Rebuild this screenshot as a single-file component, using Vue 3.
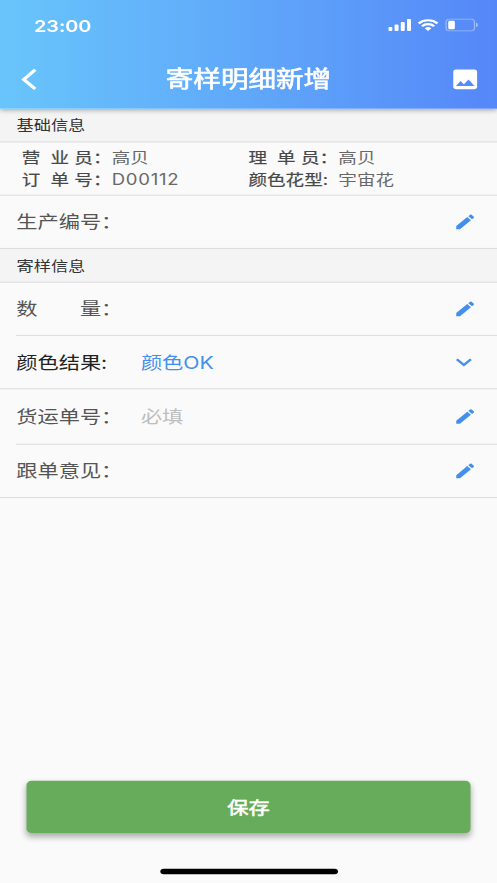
<script setup>
const info = [
  { chars: ['营', '业', '员'], value: '高贝' },
  { chars: ['理', '单', '员'], value: '高贝' },
  { chars: ['订', '单', '号'], value: 'D00112', latin: true },
  { label: '颜色花型', value: '宇宙花' },
]
const production = [{ label: '生产编号：', icon: 'edit' }]
const sample = [
  { label: '数　　量：', icon: 'edit', inset: true },
  { label: '颜色结果:', value: '颜色OK', icon: 'down', strong: true },
  { label: '货运单号：', value: '必填', hint: true, icon: 'edit', inset: true, tall: true },
  { label: '跟单意见：', icon: 'edit' },
]
const groups = [
  { title: '基础信息', info, rows: production },
  { title: '寄样信息', rows: sample },
]
</script>

<template>
  <div class="viewport">
    <main class="screen">
      <header class="header">
        <div class="status">
          <span class="time">23:00</span>
          <div class="indicators">
            <svg class="signal" viewBox="0 0 18 12">
              <rect x="0" y="7.8" width="3" height="3.7" rx=".8" />
              <rect x="4.7" y="5.6" width="3" height="5.9" rx=".8" />
              <rect x="9.4" y="3.3" width="3" height="8.2" rx=".8" />
              <rect x="14.1" y=".5" width="3" height="11" rx=".8" />
            </svg>
            <svg class="wifi" viewBox="0 0 16 12">
              <path d="M.9 4.5a10.2 10.2 0 0 1 14.2 0M3.4 7.1a6.6 6.6 0 0 1 9.2 0" fill="none" stroke="#fff" stroke-width="2" />
              <path d="M8 11.5 5.5 9a3.6 3.6 0 0 1 5 0z" />
            </svg>
            <svg class="battery" viewBox="0 0 25 12">
              <rect x=".5" y=".5" width="21.5" height="11" rx="2.8" fill="none" stroke="#fff" stroke-opacity=".42" />
              <rect x="2.2" y="2.1" width="5" height="7.8" rx="1.2" />
              <path d="M23.2 4v4c.8-.3 1.3-1.1 1.3-2s-.5-1.7-1.3-2z" fill-opacity=".5" />
            </svg>
          </div>
        </div>
        <nav class="nav">
          <svg class="back" viewBox="0 0 14 22"><path d="M11.6 2.1 2.9 11l8.7 8.9" /></svg>
          <h1>寄样明细新增</h1>
          <svg class="picture" viewBox="0 0 24 24"><path d="M21 19V5c0-1.1-.9-2-2-2H5c-1.1 0-2 .9-2 2v14c0 1.1.9 2 2 2h14c1.1 0 2-.9 2-2zM8.5 13.5l2.5 3.01L14.5 12l4.5 6H5l3.5-4.5z" /></svg>
        </nav>
      </header>

      <section v-for="g in groups" :key="g.title">
        <h2>{{ g.title }}</h2>
        <dl v-if="g.info" class="info">
          <div v-for="(item, i) in g.info" :key="i" class="pair">
            <dt v-if="item.chars" class="spread"><span v-for="(c, n) in item.chars" :key="n">{{ c }}</span><span>：</span></dt>
            <dt v-else>{{ item.label }}:</dt>
            <dd :class="{ latin: item.latin }">{{ item.value }}</dd>
          </div>
        </dl>
        <div v-for="row in g.rows" :key="row.label" class="row" :class="{ inset: row.inset, tall: row.tall }">
          <span class="label" :class="{ strong: row.strong }">{{ row.label }}</span>
          <span class="value" :class="{ hint: row.hint }">{{ row.value }}</span>
          <svg v-if="row.icon === 'edit'" class="edit" viewBox="0 0 24 24"><path d="M3 17.25V21h3.75L17.81 9.94l-3.75-3.75L3 17.25zM20.71 7.04c.39-.39.39-1.02 0-1.41l-2.34-2.34c-.39-.39-1.02-.39-1.41 0l-1.83 1.83 3.75 3.75 1.83-1.83z" /></svg>
          <svg v-else class="down" viewBox="0 0 24 24"><path d="M7.41 8.59 12 13.17l4.59-4.58L18 10l-6 6-6-6z" /></svg>
        </div>
      </section>

      <footer>
        <button type="button">保存</button>
        <div class="home"></div>
      </footer>
    </main>
  </div>
</template>

<style>
body {
  margin: 0;
  background: #fafafa;
}
</style>

<style scoped>
.viewport {
  width: 497px;
  height: 883px;
  overflow: hidden;
}
.screen {
  display: flex;
  flex-direction: column;
  width: 375px;
  height: 812px;
  transform: scale(1.32533, 1.08744);
  transform-origin: 0 0;
  background: #fafafa;
  font-family: Inter, 'Noto Sans CJK SC', sans-serif;
  color: #555;
}
.header {
  position: relative;
  height: 100px;
  flex: none;
  background: linear-gradient(90deg, #68c5fa, #60a9fa 48%, #5587f8);
  box-shadow: 0 1px 4px rgba(0, 0, 0, .35);
  color: #fff;
  fill: #fff;
}
.status {
  display: flex;
  justify-content: space-between;
  height: 44px;
  box-sizing: border-box;
  padding: 17px 14.5px 0 25.7px;
}
.time {
  font-size: 15px;
  font-weight: 600;
  line-height: 13px;
  letter-spacing: -.05px;
}
.indicators {
  display: flex;
}
.indicators svg {
  height: 12px;
}
.signal {
  width: 18px;
  margin-right: 4px;
}
.wifi {
  width: 16px;
  margin-right: 4.5px;
}
.battery {
  width: 25px;
}
.nav {
  display: flex;
  align-items: center;
  justify-content: space-between;
  height: 57px;
  padding: 0 12px 0 15px;
}
.back {
  width: 14px;
  height: 22px;
  margin-right: 7px;
}
.back path {
  fill: none;
  stroke: #fff;
  stroke-width: 2.7;
}
.nav h1 {
  margin: 0;
  font-size: 20.8px;
  line-height: 30px;
  font-weight: 400;
  -webkit-text-stroke: .55px #fff;
}
.picture {
  width: 24px;
  height: 24px;
}
h2 {
  margin: 0;
  height: 30px;
  padding-left: 12.4px;
  border-bottom: 1px solid #dedede;
  background: #f4f4f4;
  font-size: 13px;
  line-height: 30px;
  font-weight: 400;
  color: #333;
}
.info {
  display: grid;
  grid-template-columns: 171px 1fr;
  align-content: center;
  height: 48px;
  margin: 0;
  padding-left: 16.5px;
  border-bottom: 1px solid #dedede;
  font-size: 14px;
  line-height: 20px;
}
.pair {
  display: flex;
}
dt {
  width: 67.8px;
  white-space: nowrap;
  color: #484848;
  -webkit-text-stroke: .2px #484848;
}
.spread span:first-child {
  margin-right: 7.6px;
}
.spread span:nth-child(2) {
  margin-right: 4px;
}
dd {
  margin: 0;
  color: #686868;
}
dd.latin {
  letter-spacing: .55px;
}
.row {
  display: flex;
  align-items: center;
  height: 48px;
  padding: 0 15px 0 12.3px;
  border-bottom: 1px solid #dedede;
  font-size: 16px;
  line-height: 24px;
}
.row.inset {
  margin-left: 12px;
  padding-left: .3px;
}
.row.tall {
  height: 50px;
}
.label {
  width: 94px;
  white-space: nowrap;
}
.label.strong {
  color: #222;
}
.value {
  flex: 1;
  color: #438fee;
}
.value.hint {
  color: #bdbdbd;
}
.edit {
  width: 18px;
  height: 18px;
  fill: #438fee;
}
.down {
  width: 24px;
  height: 24px;
  margin-right: -2px;
  fill: #438fee;
}
footer {
  display: flex;
  flex-direction: column;
  align-items: center;
  margin-top: auto;
  padding: 0 20px 8px;
}
button {
  width: 100%;
  height: 48px;
  border: 0;
  border-radius: 4px;
  background: #67ac5b;
  box-shadow: 0 3px 5px rgba(0, 0, 0, .32);
  color: #fff;
  font: 400 16px Inter, 'Noto Sans CJK SC', sans-serif;
  -webkit-text-stroke: .5px #fff;
}
.home {
  width: 134px;
  height: 5px;
  margin-top: 33px;
  border-radius: 3px;
  background: #000;
}
</style>
